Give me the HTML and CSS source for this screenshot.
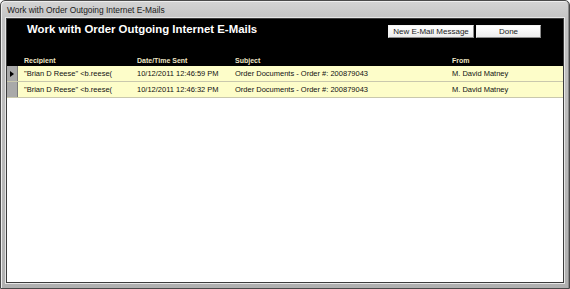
FILE: index.html
```html
<!DOCTYPE html>
<html lang="en">
<head>
  <meta charset="UTF-8" />
  <title>Work with Order Outgoing Internet E-Mails</title>
  <link rel="stylesheet" href="styles.css">
</head>
<body>
  <div class="window">
    <div class="titlebar">
      <span class="title">Work with Order Outgoing Internet E-Mails</span>
    </div>

    <div class="client">
      <div class="header">
        <div class="header-top">
          <h1>Work with Order Outgoing Internet E-Mails</h1>
          <div class="buttons">
            <button class="btn btn-new">New E-Mail Message</button>
            <button class="btn btn-done">Done</button>
          </div>
        </div>
        <div class="cols">
          <span class="sel"></span>
          <span class="c-rcpt">Recipient</span>
          <span class="c-date">Date/Time Sent</span>
          <span class="c-subj">Subject</span>
          <span class="c-from">From</span>
        </div>
      </div>

      <div class="row current">
        <span class="sel"><i class="arrow"></i></span>
        <span class="c-rcpt">"Brian D Reese" &lt;b.reese(</span>
        <span class="c-date">10/12/2011 12:46:59 PM</span>
        <span class="c-subj">Order Documents - Order #: 200879043</span>
        <span class="c-from">M. David Matney</span>
      </div>
      <div class="row">
        <span class="sel"></span>
        <span class="c-rcpt">"Brian D Reese" &lt;b.reese(</span>
        <span class="c-date">10/12/2011 12:46:32 PM</span>
        <span class="c-subj">Order Documents - Order #: 200879043</span>
        <span class="c-from">M. David Matney</span>
      </div>

      <div class="blank"></div>
    </div>
  </div>
</body>
</html>
```

FILE: styles.css
```css
* {
  margin: 0;
  padding: 0;
  box-sizing: border-box;
}

body {
  width: 570px;
  height: 289px;
  background: #fff;
  font-family: 'Liberation Sans', Arial, sans-serif;
  overflow: hidden;
}

.window {
  width: 570px;
  height: 289px;
  display: flex;
  flex-direction: column;
  background: linear-gradient(to bottom, #d4d4d4 0, #c2c2c2 20px, #b0b0b0 100%);
  border: 1px solid #4a4a4a;
  border-radius: 5px 5px 0 0;
  padding: 0 5px 5px 5px;
  box-shadow: inset 1px 1px 0 #eeeeee, inset -1px 0 0 #8a8a8a;
}

.titlebar {
  height: 17px;
  display: flex;
  align-items: center;
}

.title {
  font-size: 8.4px;
  color: #1a1a1a;
  padding-left: 1px;
  padding-top: 1px;
}

.client {
  flex: 1;
  display: flex;
  flex-direction: column;
  background: #fff;
  border: 1px solid #3c3c3c;
  box-shadow: 0 0 0 1px #e6e6e6;
}

.header {
  background: #000;
  height: 47px;
  display: flex;
  flex-direction: column;
  justify-content: space-between;
}

.header-top {
  display: flex;
  justify-content: space-between;
  align-items: flex-start;
  padding: 4px 22px 0 20px;
}

h1 {
  color: #fff;
  font-size: 11.4px;
  font-weight: bold;
}

.buttons {
  display: flex;
  gap: 2px;
  margin-top: 2px;
}

.btn {
  height: 13px;
  font-family: 'Liberation Sans', Arial, sans-serif;
  font-size: 8px;
  color: #222;
  background: linear-gradient(to bottom, #ffffff, #ececec);
  border: 1px solid;
  border-color: #f4f4f4 #8c8c8c #8c8c8c #f4f4f4;
  line-height: 11px;
}

.btn-new {
  width: 86px;
}

.btn-done {
  width: 65px;
}

.cols,
.row {
  display: flex;
  align-items: center;
  font-size: 7.5px;
}

.cols {
  height: 11px;
  font-size: 7px;
  color: #efe6c6;
  font-weight: bold;
}

.row {
  height: 16px;
  background: #fdfdc9;
  border-bottom: 1px solid #c9c8ad;
  color: #111;
}

.sel {
  width: 11px;
  height: 100%;
  flex-shrink: 0;
  display: flex;
  align-items: center;
  justify-content: center;
}

.row .sel {
  background: #a9a9a9;
  border-right: 1px solid #7a7a7a;
}

.arrow {
  width: 0;
  height: 0;
  border-top: 3.5px solid transparent;
  border-bottom: 3.5px solid transparent;
  border-left: 4px solid #000;
}

.c-rcpt {
  width: 119px;
  padding-left: 6px;
  padding-right: 6px;
  white-space: nowrap;
  overflow: hidden;
}

.c-date {
  width: 98px;
}

.c-subj {
  width: 217px;
}

.c-from {
  flex: 1;
}

.blank {
  flex: 1;
  background: #fff;
}
```
